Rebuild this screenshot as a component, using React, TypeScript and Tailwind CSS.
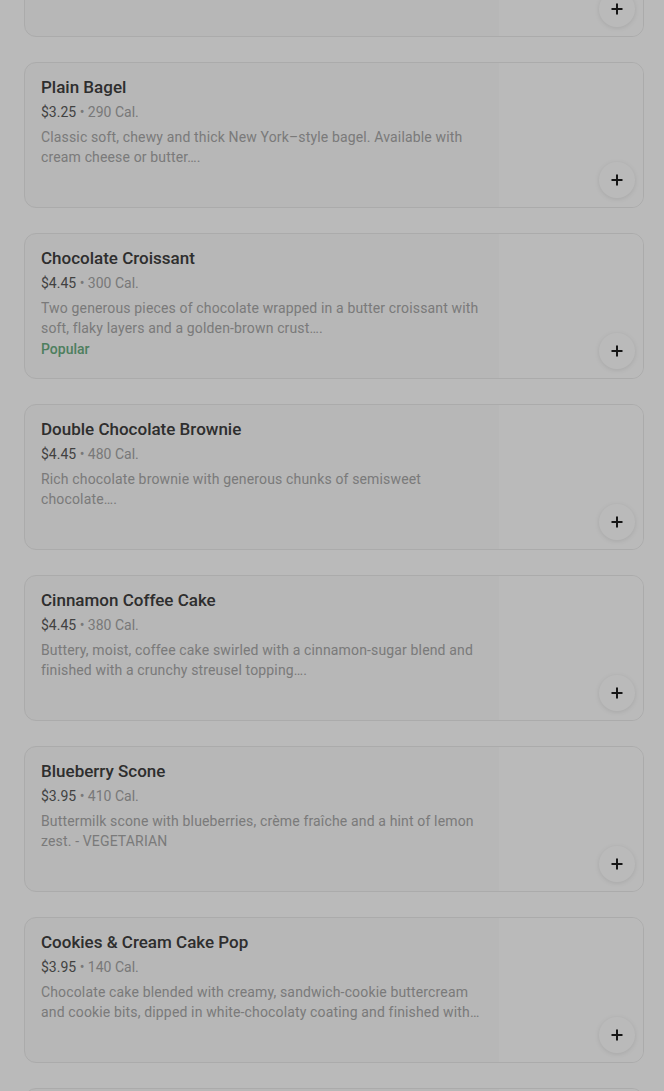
import React from "react";

type Item = {
  name: string;
  price: string;
  cal: string;
  desc: string;
  tag?: string;
};

const items: Item[] = [
  {
    name: "Everything Bagel",
    price: "$3.25",
    cal: "290 Cal.",
    desc: "Classic soft, chewy bagel topped with sesame, poppy seeds, garlic and onion…",
  },
  {
    name: "Plain Bagel",
    price: "$3.25",
    cal: "290 Cal.",
    desc: "Classic soft, chewy and thick New York–style bagel. Available with cream cheese or butter….",
  },
  {
    name: "Chocolate Croissant",
    price: "$4.45",
    cal: "300 Cal.",
    desc: "Two generous pieces of chocolate wrapped in a butter croissant with soft, flaky layers and a golden-brown crust….",
    tag: "Popular",
  },
  {
    name: "Double Chocolate Brownie",
    price: "$4.45",
    cal: "480 Cal.",
    desc: "Rich chocolate brownie with generous chunks of semisweet chocolate….",
  },
  {
    name: "Cinnamon Coffee Cake",
    price: "$4.45",
    cal: "380 Cal.",
    desc: "Buttery, moist, coffee cake swirled with a cinnamon-sugar blend and finished with a crunchy streusel topping….",
  },
  {
    name: "Blueberry Scone",
    price: "$3.95",
    cal: "410 Cal.",
    desc: "Buttermilk scone with blueberries, crème fraîche and a hint of lemon zest.  - VEGETARIAN",
  },
  {
    name: "Cookies & Cream Cake Pop",
    price: "$3.95",
    cal: "140 Cal.",
    desc: "Chocolate cake blended with creamy, sandwich-cookie buttercream and cookie bits, dipped in white-chocolaty coating and finished with sprinkles.",
  },
  {
    name: "Birthday Cake Pop",
    price: "$3.95",
    cal: "160 Cal.",
    desc: "Vanilla cake mixed with vanilla buttercream, dipped in pink chocolaty icing.",
  },
];

function PlusIcon() {
  return (
    <svg width="12" height="12" viewBox="0 0 12 12" fill="none">
      <path d="M6 0.5v11M0.5 6h11" stroke="#1f1f1f" strokeWidth="2" />
    </svg>
  );
}

function MenuCard({ item, first }: { item: Item; first?: boolean }) {
  return (
    <div
      className={`relative flex h-[146px] shrink-0 overflow-hidden rounded-xl border border-[#ebebeb] bg-[#fbfbfb] ${
        first ? "-mt-[109px]" : ""
      }`}
    >
      <div className="flex-1 min-w-0 pl-4 pr-4 pt-3">
        <div className="text-[17px] leading-6 font-medium text-[#404040] truncate">{item.name}</div>
        <div className="mt-[3px] text-[14px] leading-5">
          <span className="text-[#5a5a5a]">{item.price}</span>
          <span className="text-[#a6a6a6]"> • {item.cal}</span>
        </div>
        <p className="mt-[5px] text-[14px] leading-5 tracking-[0.15px] text-[#a8a8a8] line-clamp-2 whitespace-pre-line">
          {item.desc}
        </p>
        {item.tag && (
          <div className="mt-[1px] text-[14px] leading-5 font-medium text-[#6aae82]">{item.tag}</div>
        )}
      </div>
      <div className="w-[144px] h-[144px] shrink-0 bg-white" />
      <button className="absolute right-2 bottom-[9px] w-9 h-9 rounded-full bg-white shadow-[0_1px_5px_rgba(0,0,0,0.1)] flex items-center justify-center">
        <PlusIcon />
      </button>
    </div>
  );
}

export default function App() {
  return (
    <div
      className="relative h-[1091px] overflow-hidden bg-white"
      style={{ fontFamily: "Roboto, 'Noto Sans', sans-serif" }}
    >
      <div className="flex flex-col gap-[25px] pl-6 pr-5">
        {items.map((item, i) => (
          <MenuCard key={item.name} item={item} first={i === 0} />
        ))}
      </div>

      {/* dimmed backdrop */}
      <div className="absolute inset-0 bg-black/[0.27]" />
    </div>
  );
}
